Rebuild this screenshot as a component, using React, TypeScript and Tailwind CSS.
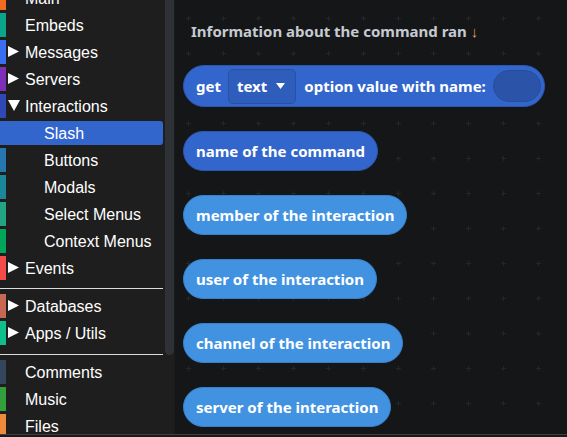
import React from "react";

type Item = {
    label: string;
    color: string;
    arrow?: "right" | "down";
    sub?: boolean;
    active?: boolean;
};

const groupA: Item[] = [
    { label: "Main", color: "#f26b21" },
    { label: "Embeds", color: "#0ba68a" },
    { label: "Messages", color: "#3a6ff2", arrow: "right" },
    { label: "Servers", color: "#7d2fb8", arrow: "right" },
    { label: "Interactions", color: "#2f48b5", arrow: "down" },
    { label: "Slash", color: "#3366cc", sub: true, active: true },
    { label: "Buttons", color: "#2677b0", sub: true },
    { label: "Modals", color: "#1a8899", sub: true },
    { label: "Select Menus", color: "#23a584", sub: true },
    { label: "Context Menus", color: "#00a65a", sub: true },
    { label: "Events", color: "#f44a4a", arrow: "right" },
];

const groupB: Item[] = [
    { label: "Databases", color: "#c76852", arrow: "right" },
    { label: "Apps / Utils", color: "#10c08c", arrow: "right" },
];

const groupC: Item[] = [
    { label: "Comments", color: "#34465b" },
    { label: "Music", color: "#33a03b" },
    { label: "Files", color: "#ef8a3a" },
];

function Arrow({ dir }: { dir: "right" | "down" }) {
    return (
        <svg width="12" height="12" viewBox="0 0 12 12" className="absolute left-[8px] top-[6px]">
            {dir === "right" ? (
                <polygon points="0,0 11,5.5 0,11" fill="#ffffff" />
            ) : (
                <polygon points="0,0 12,0 6,11" fill="#ffffff" />
            )}
        </svg>
    );
}

function Row({ item }: { item: Item }) {
    return (
        <div className="h-[27px] shrink-0">
            <div
                className={`relative h-[24px] flex items-center ${item.active ? "bg-[#3366cc] rounded-r-[3px]" : ""}`}
            >
                <div className="w-[6px] h-full" style={{ backgroundColor: item.color }} />
                {item.arrow && <Arrow dir={item.arrow} />}
                <span className={`text-[16px] text-white leading-none pt-px ${item.sub ? "ml-[38px]" : "ml-[19px]"}`}>
                    {item.label}
                </span>
            </div>
        </div>
    );
}

function Separator({ h }: { h: string }) {
    return (
        <div className={`${h} shrink-0 flex items-center`}>
            <div className="w-full h-px bg-[#dcdcdc]" />
        </div>
    );
}

function Block({ text, color }: { text: string; color: string }) {
    return (
        <div
            className={`h-[40px] px-3 rounded-full flex items-center border text-white text-[15px] font-bold ${color}`}
        >
            {text}
        </div>
    );
}

export default function App() {
    return (
        <div className="w-[567px] h-[437px] overflow-hidden flex flex-col bg-[#1e1e1e] font-['Liberation_Sans',Arial,sans-serif]">
            <div className="h-[434px] flex shrink-0">
                {/* Toolbox */}
                <div className="w-[175px] h-full flex shrink-0 bg-[#1e1e1e]">
                    <div className="w-[163px] h-full overflow-hidden">
                        <div className="flex flex-col -mt-[14px]">
                            {groupA.map((it) => (
                                <Row key={it.label} item={it} />
                            ))}
                            <Separator h="h-[11px]" />
                            {groupB.map((it) => (
                                <Row key={it.label} item={it} />
                            ))}
                            <Separator h="h-[12px]" />
                            {groupC.map((it) => (
                                <Row key={it.label} item={it} />
                            ))}
                        </div>
                    </div>
                    <div className="w-[2px]" />
                    <div className="w-[9px]">
                        <div className="h-[355px] bg-[#2e3135] rounded-b-full" />
                    </div>
                    <div className="w-px bg-[#1a1b1d]" />
                </div>

                {/* Workspace */}
                <div className="relative flex-1 h-full bg-[#151618] overflow-hidden">
                    <svg className="absolute inset-0 w-full h-full">
                        <defs>
                            <pattern id="grid" x="-5" y="0" width="35" height="35" patternUnits="userSpaceOnUse">
                                <line x1="18.5" y1="16" x2="18.5" y2="21" stroke="#24262a" strokeWidth="1" />
                                <line x1="16" y1="18.5" x2="21" y2="18.5" stroke="#24262a" strokeWidth="1" />
                            </pattern>
                        </defs>
                        <rect width="100%" height="100%" fill="url(#grid)" />
                    </svg>

                    <div className="relative flex flex-col items-start pl-[8px] pt-[20px] font-['Noto_Sans',sans-serif]">
                        <div className="ml-[8px] h-[22px] leading-[22px] text-[15px] font-bold text-[#c6cad1]">
                            Information about the command ran <span className="text-[#d6a56d]">↓</span>
                        </div>

                        <div className="mt-[23px] flex flex-col items-start gap-6">
                            <div className="h-[42px] pl-3 pr-[3px] rounded-full flex items-center bg-[#3366cc] border border-[#2b56ad] text-white text-[15px] font-bold">
                                <span>get</span>
                                <div className="ml-[7px] h-[35px] pl-[8px] pr-[10px] flex items-center gap-[9px] rounded-[5px] bg-[#2f5dbb] border border-[#2950a2]">
                                    <span>text</span>
                                    <svg width="9" height="6" viewBox="0 0 9 6">
                                        <polygon points="0,0 9,0 4.5,6" fill="#ffffff" />
                                    </svg>
                                </div>
                                <span className="ml-[8px]">option value with name:</span>
                                <div className="ml-[7px] w-[48px] h-[32px] rounded-full bg-[#2b54a9] border border-[#284d9a]" />
                            </div>

                            <Block text="name of the command" color="bg-[#3366cc] border-[#2b56ad]" />
                            <Block text="member of the interaction" color="bg-[#4292e2] border-[#3a80c8]" />
                            <Block text="user of the interaction" color="bg-[#4292e2] border-[#3a80c8]" />
                            <Block text="channel of the interaction" color="bg-[#4292e2] border-[#3a80c8]" />
                            <Block text="server of the interaction" color="bg-[#4292e2] border-[#3a80c8]" />
                        </div>
                    </div>
                </div>
            </div>
            <div className="h-[3px] shrink-0 border-t border-[#3e3f42] bg-[#1a1a1a]" />
        </div>
    );
}
